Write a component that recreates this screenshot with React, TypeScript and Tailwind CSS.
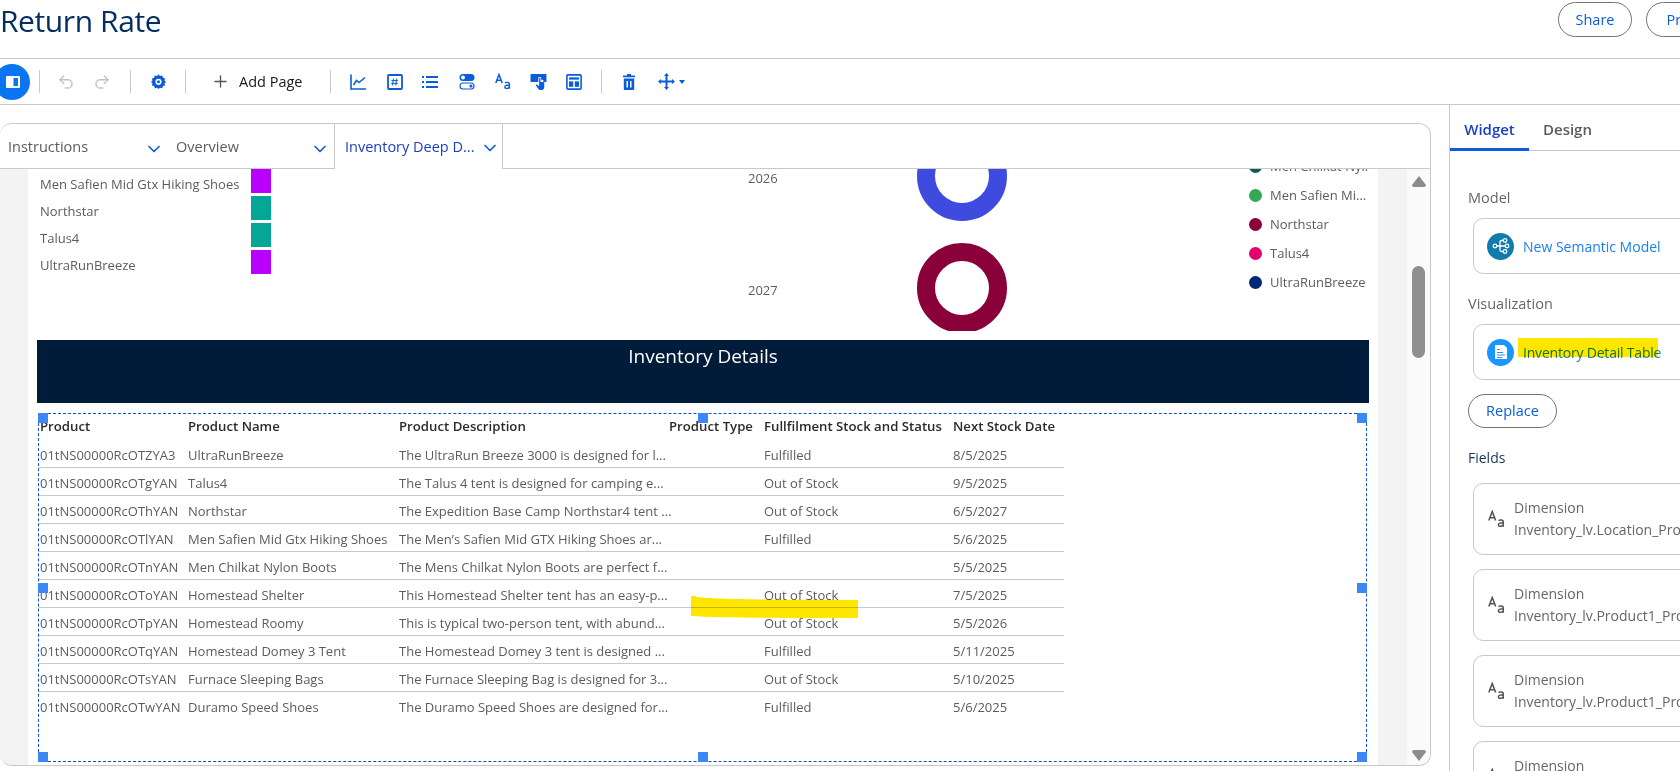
import { Undo2, Redo2, Plus, ChevronDown } from "lucide-react";

const FONT = "font-['Open_Sans','Noto_Sans',sans-serif]";

const rows = [
  ["01tNS00000RcOTZYA3", "UltraRunBreeze", "The UltraRun Breeze 3000 is designed for l...", "Fulfilled", "8/5/2025"],
  ["01tNS00000RcOTgYAN", "Talus4", "The Talus 4 tent is designed for camping e...", "Out of Stock", "9/5/2025"],
  ["01tNS00000RcOThYAN", "Northstar", "The Expedition Base Camp Northstar4 tent ...", "Out of Stock", "6/5/2027"],
  ["01tNS00000RcOTlYAN", "Men Safien Mid Gtx Hiking Shoes", "The Men’s Safien Mid GTX Hiking Shoes ar...", "Fulfilled", "5/6/2025"],
  ["01tNS00000RcOTnYAN", "Men Chilkat Nylon Boots", "The Mens Chilkat Nylon Boots are perfect f...", "", "5/5/2025"],
  ["01tNS00000RcOToYAN", "Homestead Shelter", "This Homestead Shelter tent has an easy-p...", "Out of Stock", "7/5/2025"],
  ["01tNS00000RcOTpYAN", "Homestead Roomy", "This is typical two-person tent, with abund...", "Out of Stock", "5/5/2026"],
  ["01tNS00000RcOTqYAN", "Homestead Domey 3 Tent", "The Homestead Domey 3 tent is designed ...", "Fulfilled", "5/11/2025"],
  ["01tNS00000RcOTsYAN", "Furnace Sleeping Bags", "The Furnace Sleeping Bag is designed for 3...", "Out of Stock", "5/10/2025"],
  ["01tNS00000RcOTwYAN", "Duramo Speed Shoes", "The Duramo Speed Shoes are designed for...", "Fulfilled", "5/6/2025"],
];

const BLUE = "#0b5cd8";

function Sep() {
  return <div className="h-[23px] w-px bg-[#c9c9c9] shrink-0" />;
}

function AaIcon({ color = BLUE, className = "" }: { color?: string; className?: string }) {
  return (
    <svg viewBox="0 0 16 16" className={className} fill="none" stroke={color}>
      <path d="M0.8 9.5 L4 1 L7.2 9.5 M1.9 6.8 H6.1" strokeWidth="1.5" />
      <path d="M10 9.6 C10.6 8.6 14.4 8.4 14.4 10.8 V15.2 M14.4 12 C12 11.4 9.8 11.8 9.8 13.4 C9.8 15.4 13.4 15.4 14.4 13.6" strokeWidth="1.4" />
    </svg>
  );
}

function Toolbar() {
  return (
    <div className="h-[46px] shrink-0 border-b border-[#c9c9c9] flex items-center overflow-hidden">
      <div className="w-9 h-9 rounded-full bg-[#0b74f1] -ml-[6px] shrink-0 flex items-center justify-center">
        <svg width="14" height="12" viewBox="0 0 14 12" className="ml-[1px]">
          <rect x="0" y="0" width="14" height="12" rx="1" fill="#fff" />
          <rect x="7.5" y="2" width="4.5" height="8" fill="#0b74f1" />
        </svg>
      </div>
      <div className="ml-[9px]"><Sep /></div>
      <Undo2 size={18} color="#c4c4c4" strokeWidth={2} className="ml-[17px]" />
      <Redo2 size={18} color="#c4c4c4" strokeWidth={2} className="ml-[18px]" />
      <div className="ml-[19px]"><Sep /></div>
      <svg viewBox="0 0 16 16" className="w-[15px] h-[15px] ml-[20px]">
        <path fillRule="evenodd" fill={BLUE} d="M8 0.3 L9.6 2.1 L12 1.6 L12.8 3.9 L15.1 4.7 L14.4 7 L16 8.5 L14.4 10 L15 12.2 L12.7 12.9 L12 15.2 L9.6 14.7 L8 16 L6.4 14.7 L4 15.2 L3.3 12.9 L1 12.2 L1.6 10 L0 8.5 L1.6 7 L0.9 4.7 L3.2 3.9 L4 1.6 L6.4 2.1 Z M8 5 A3.3 3.3 0 1 0 8 11.6 A3.3 3.3 0 1 0 8 5 Z" />
        <circle cx="8" cy="8.3" r="1.6" fill={BLUE} />
      </svg>
      <div className="ml-[19px]"><Sep /></div>
      <Plus size={19} color="#555" strokeWidth={1.7} className="ml-[25px]" />
      <span className="ml-[9px] w-[63px] whitespace-nowrap text-[14.5px] font-medium text-[#181818]">Add Page</span>
      <div className="ml-[28px]"><Sep /></div>
      <svg viewBox="0 0 16 16" className="w-[16px] h-[16px] ml-[19px]" fill="none" stroke={BLUE} strokeWidth="1.6">
        <path d="M1 0.5 V15 H16" />
        <path d="M3.5 11 L6.5 6.5 L9 8.5 L15 3.5" />
      </svg>
      <svg viewBox="0 0 16 16" className="w-[16px] h-[16px] ml-[21px]">
        <rect x="1" y="1" width="14" height="14" rx="1" fill="none" stroke={BLUE} strokeWidth="1.8" />
        <path d="M6.4 4.5 L5.6 11.5 M9.6 4.5 L8.8 11.5 M4.4 6.6 H11 M4.2 9.4 H10.8" stroke={BLUE} strokeWidth="1" />
      </svg>
      <svg viewBox="0 0 16 16" className="w-[16px] h-[16px] ml-[19px]" fill={BLUE}>
        <rect x="0" y="2" width="2" height="2" /><rect x="4" y="2" width="12" height="2" />
        <rect x="0" y="7" width="2" height="2" /><rect x="4" y="7" width="12" height="2" />
        <rect x="0" y="12" width="2" height="2" /><rect x="4" y="12" width="12" height="2" />
      </svg>
      <svg viewBox="0 0 16 16" className="w-[16px] h-[17px] ml-[21px]">
        <rect x="0.5" y="0.5" width="15" height="7" rx="3.5" fill={BLUE} />
        <circle cx="4" cy="4" r="2" fill="#fff" />
        <rect x="1" y="9.5" width="14" height="6" rx="3" fill="#fff" stroke={BLUE} strokeWidth="1.1" />
        <circle cx="12" cy="12.5" r="1.6" fill={BLUE} />
      </svg>
      <AaIcon className="w-[16px] h-[17px] ml-[20px]" />
      <svg viewBox="0 0 16 16" className="w-[17px] h-[17px] ml-[19px]" fill={BLUE}>
        <path d="M1 1 H15 A0.5 0.5 0 0 1 15.5 1.5 V8 A0.5 0.5 0 0 1 15 8.5 H12.5 V7 C12.5 6 10.5 6 10.5 7 V5 C10.5 3.4 7.8 3.4 7.8 5 V8.5 H1 A0.5 0.5 0 0 1 0.5 8 V1.5 A0.5 0.5 0 0 1 1 1 Z" />
        <path d="M8.6 5 C8.6 4.2 9.8 4.2 9.8 5 V8.2 L13.4 8.8 V13.2 C13.4 15 12.4 16 11 16 H9.5 C8.2 16 7.6 14.8 6.4 13 L5.6 11.6 C5.4 10.9 6.3 10.4 6.9 11 L8.6 12.4 Z" />
      </svg>
      <svg viewBox="0 0 16 16" className="w-[16px] h-[16px] ml-[19px]">
        <rect x="0.9" y="0.9" width="14.2" height="14.2" rx="1" fill="none" stroke={BLUE} strokeWidth="1.6" />
        <rect x="3" y="3.4" width="10" height="2.2" fill={BLUE} />
        <rect x="3" y="7.4" width="4.2" height="5.4" fill={BLUE} />
        <rect x="8.8" y="7.4" width="4.2" height="5.4" fill={BLUE} />
      </svg>
      <div className="ml-[19px]"><Sep /></div>
      <svg viewBox="0 0 14 16" className="w-[14px] h-[16px] ml-[20px]" fill={BLUE}>
        <path d="M5 0 H9 V1.4 H13 V3.2 H1 V1.4 H5 Z" />
        <path fillRule="evenodd" d="M1.8 4.6 H12.2 V15 A1 1 0 0 1 11.2 16 H2.8 A1 1 0 0 1 1.8 15 Z M4.5 7 V13.6 H6 V7 Z M8 7 V13.6 H9.5 V7 Z" />
      </svg>
      <svg viewBox="0 0 17 17" className="w-[17px] h-[17px] ml-[22px]" fill={BLUE}>
        <path d="M8.5 0 L11 3 H9.5 V7.5 H14 V6 L17 8.5 L14 11 V9.5 H9.5 V14 H11 L8.5 17 L6 14 H7.5 V9.5 H3 V11 L0 8.5 L3 6 V7.5 H7.5 V3 H6 Z" />
      </svg>
      <svg viewBox="0 0 6 4" className="w-[6px] h-[4px] ml-[4px]"><path d="M0 0 H6 L3 4 Z" fill={BLUE} /></svg>
    </div>
  );
}

function Tab({ label, width, active }: { label: string; width: string; active?: boolean }) {
  return (
    <div className={`${width} h-[45px] shrink-0 flex items-center justify-between ${active ? "border-x border-[#c9c9c9] bg-white pl-[10px] pr-[2px] text-[#1a3fc4]" : "border-b border-[#c9c9c9] pt-[2px] pl-[8px] pr-[4px] text-[#5c5c5c]"}`}>
      <span className="text-[14.5px] whitespace-nowrap">{label}</span>
      <ChevronDown size={20} color={BLUE} strokeWidth={2} className="mt-[3px]" />
    </div>
  );
}

function Donut({ color, className }: { color: string; className: string }) {
  return <div className={`absolute left-0 w-[90px] h-[90px] rounded-full border-[18px] ${className}`} style={{ borderColor: color }} />;
}

function Handle({ className }: { className: string }) {
  return <div className={`absolute w-[10px] h-[10px] bg-[#3b87f5] ${className}`} />;
}

export default function App() {
  return (
    <div className={`w-[1680px] h-[771px] overflow-hidden bg-white flex flex-col ${FONT}`}>
      <header className="h-[59px] shrink-0 border-b border-[#c9c9c9] flex items-start justify-between overflow-hidden">
        <h1 className="text-[30px] leading-[42px] tracking-[-0.4px] text-[#032e61]">Return Rate</h1>
        <div className="flex gap-[14px] pt-[2px] -mr-[60px]">
          <button className="w-[74px] h-[35px] rounded-full border border-[#747474] text-[14.5px] font-medium text-[#0b5cd8]">Share</button>
          <button className="w-[94px] h-[35px] rounded-full border border-[#747474] text-[14.5px] font-medium text-[#0b5cd8]">Preview</button>
        </div>
      </header>
      <Toolbar />
      <div className="flex-1 flex min-h-0 bg-white">
        <div className="w-[1450px] shrink-0 border-r border-[#c9c9c9] pt-[18px] pr-[18px]">
          <div className="h-[643px] rounded-[12px] border border-l-0 border-[#c9c9c9] overflow-hidden flex flex-col">
            <div className="h-[45px] shrink-0 flex">
              <Tab label="Instructions" width="w-[168px]" />
              <Tab label="Overview" width="w-[166px]" />
              <Tab label="Inventory Deep D..." width="w-[169px]" active />
              <div className="flex-1 border-b border-[#c9c9c9]" />
            </div>
            <div className="flex-1 min-h-0 flex">
              <div className="flex-1 min-w-0 bg-[#f3f3f3] pl-[28px] pr-[29px] flex">
                <div className="flex-1 bg-white px-[9px] relative overflow-hidden flex flex-col">
                  <div className="h-[171px] relative shrink-0 overflow-hidden text-[13px] text-[#5c5c5c]">
                    <div className="absolute left-[3px] top-[2px] w-[231px] flex flex-col">
                      {[["Men Safien Mid Gtx Hiking Shoes", "bg-[#b900ff]"], ["Northstar", "bg-[#04a696]"], ["Talus4", "bg-[#04a696]"], ["UltraRunBreeze", "bg-[#b900ff]"]].map(([t, c]) => (
                        <div key={t} className="h-[27px] flex items-center justify-between">
                          <span className="whitespace-nowrap">{t}</span>
                          <div className={`w-[20px] h-[24px] -mt-[8px] ${c}`} />
                        </div>
                      ))}
                    </div>
                    <span className="absolute left-[711px] top-0">2026</span>
                    <span className="absolute left-[711px] top-[112px]">2027</span>
                    <div className="absolute left-[880px] top-0 w-[90px] h-[162px] overflow-hidden">
                      <Donut color="#3f4bde" className="-top-[38px]" />
                      <Donut color="#8a003a" className="top-[74px]" />
                    </div>
                    <div className="absolute left-[1212px] -top-[17px] flex flex-col">
                      {[["Men Chilkat Nyl...", "bg-[#0b5c52]"], ["Men Safien Mi...", "bg-[#34a853]"], ["Northstar", "bg-[#8a003a]"], ["Talus4", "bg-[#e6006e]"], ["UltraRunBreeze", "bg-[#002878]"]].map(([t, c]) => (
                        <div key={t} className="h-[29px] flex items-center gap-[8px]">
                          <div className={`w-[13px] h-[13px] rounded-full ${c}`} />
                          <span className="whitespace-nowrap">{t}</span>
                        </div>
                      ))}
                    </div>
                  </div>
                  <div className="h-[63px] shrink-0 bg-[#011b3a] text-white text-[19px] text-center leading-[32px]">Inventory Details</div>
                  <div className="relative mt-[10px] ml-[1px] mr-[2px] h-[349px] border border-dashed border-[#0b4fd8]">
                    <div className="w-[1025px] text-[13px] text-[#5c5c5c]">
                      <div className="h-[26px] flex items-center font-semibold text-[13.2px] text-[#2b2b2b]">
                        <div className="w-[149px] pl-[1px]">Product</div>
                        <div className="w-[211px]">Product Name</div>
                        <div className="w-[270px]">Product Description</div>
                        <div className="w-[95px]">Product Type</div>
                        <div className="w-[189px] whitespace-nowrap">Fullfilment Stock and Status</div>
                        <div>Next Stock Date</div>
                      </div>
                      {rows.map((r, i) => (
                        <div key={r[0]} className={`h-[28px] pt-[4px] flex items-center whitespace-nowrap ${i < rows.length - 1 ? "border-b border-[#c9c9c9]" : ""}`}>
                          <div className="w-[149px] pl-[1px]">{r[0]}</div>
                          <div className="w-[211px]">{r[1]}</div>
                          <div className="w-[270px]">{r[2]}</div>
                          <div className="w-[95px]" />
                          <div className="w-[189px]">{r[3]}</div>
                          <div>{r[4]}</div>
                        </div>
                      ))}
                    </div>
                    <Handle className="-left-px -top-px" />
                    <Handle className="left-[659px] -top-px" />
                    <Handle className="-right-px -top-px" />
                    <Handle className="-left-px top-[169px]" />
                    <Handle className="-right-px top-[169px]" />
                    <Handle className="-left-px -bottom-px" />
                    <Handle className="left-[659px] -bottom-px" />
                    <Handle className="-right-px -bottom-px" />
                    <div className="absolute left-[652px] top-[182px] w-[167px] h-[22px] mix-blend-multiply">
                      <svg viewBox="0 0 167 22" className="w-full h-full"><path d="M0 0 L5 0 L5 1 C30 3 60 4 167 4 V22 C100 22 30 22 0 20 Z" fill="#ffe600" /></svg>
                    </div>
                  </div>
                </div>
              </div>
              <div className="w-[23px] shrink-0 bg-[#fafafa] flex flex-col items-center justify-between pt-[7px] pb-[4px] relative">
                <svg viewBox="0 0 14 11" className="w-[14px] h-[11px]"><path d="M7 0 L14 9 Q14 11 12 11 H2 Q0 11 0 9 Z" fill="#8c8c8c" /></svg>
                <div className="absolute left-[5px] top-[97px] w-[13px] h-[92px] rounded-full bg-[#8f8f8f]" />
                <svg viewBox="0 0 14 11" className="w-[14px] h-[11px]"><path d="M7 11 L14 2 Q14 0 12 0 H2 Q0 0 0 2 Z" fill="#8c8c8c" /></svg>
              </div>
            </div>
          </div>
        </div>
        <aside className="flex-1 min-w-0 overflow-hidden">
          <div className="h-[46px] border-b border-[#c9c9c9] flex">
            <div className="w-[79px] h-[46px] border-b-[3px] border-[#0b5cd8] text-[15px] font-semibold text-[#1a3fc4] flex items-center justify-center pt-[5px]">Widget</div>
            <div className="pl-[14px] text-[15px] font-semibold text-[#5c5c5c] leading-[48px]">Design</div>
          </div>
          <div className="pl-[18px] pt-[36px] w-[300px]">
            <div className="text-[14.5px] leading-[22px] text-[#666]">Model</div>
            <div className="ml-[5px] mt-[9px] h-[56px] rounded-[10px] border border-[#c9c9c9] flex items-center pl-[13px] gap-[9px]">
              <div className="w-[27px] h-[27px] rounded-full bg-[#107cad] flex items-center justify-center">
                <svg viewBox="0 0 20 20" className="w-[20px] h-[20px]" fill="none" stroke="#fff" strokeWidth="1.3">
                  <circle cx="4" cy="10" r="1.8" />
                  <circle cx="14" cy="4.5" r="1.8" />
                  <circle cx="16" cy="10" r="1.8" />
                  <circle cx="14" cy="15.5" r="1.8" />
                  <path d="M6 10 H14 M9 10 V6 Q9 4.5 10.5 4.5 H12 M9 10 V14 Q9 15.5 10.5 15.5 H12" />
                </svg>
              </div>
              <span className="text-[14px] text-[#1b7ff0] whitespace-nowrap">New Semantic Model</span>
            </div>
            <div className="text-[14.5px] leading-[22px] text-[#666] mt-[19px]">Visualization</div>
            <div className="relative ml-[5px] mt-[9px] h-[56px] rounded-[10px] border border-[#c9c9c9] flex items-center pl-[13px] gap-[9px]">
              <div className="w-[27px] h-[27px] rounded-full bg-[#1b96ff] flex items-center justify-center">
                <svg viewBox="0 0 16 16" className="w-[16px] h-[16px]">
                  <path d="M2 1 H11 L14 4 V15 H2 Z" fill="#fff" />
                  <path d="M4 5 H7 V6 H4 Z M4 8 H10 V9 H4 Z M4 10.5 H12 V11.5 H4 Z M4 13 H9 V14 H4 Z" fill="#1b96ff" />
                </svg>
              </div>
              <span className="text-[14px] tracking-[-0.2px] text-[#1b7ff0] whitespace-nowrap">Inventory Detail Table</span>
              <div className="absolute left-[44px] top-[13px] w-[140px] h-[19px] bg-[#ffe600] mix-blend-multiply" />
            </div>
            <button className="mt-[14px] w-[89px] h-[34px] rounded-full border border-[#747474] text-[14.5px] font-medium text-[#0b5cd8]">Replace</button>
            <div className="text-[14px] leading-[20px] text-[#16325c] mt-[20px]">Fields</div>
            <div className="mt-[15px] ml-[5px] flex flex-col gap-[14px]">
              {["Inventory_lv.Location_Product_Name", "Inventory_lv.Product1_Product_Name", "Inventory_lv.Product1_Product_Desc", "Inventory_lv.Product1_Product_Type"].map((f) => (
                <div key={f} className="h-[72px] shrink-0 rounded-[10px] border border-[#c9c9c9] flex items-center pl-[14px] gap-[9px] text-[14px] leading-[22px] text-[#666] whitespace-nowrap">
                  <AaIcon color="#555" className="w-[17px] h-[18px] shrink-0" />
                  <div>
                    <div>Dimension</div>
                    <div>{f}</div>
                  </div>
                </div>
              ))}
            </div>
          </div>
        </aside>
      </div>
    </div>
  );
}
